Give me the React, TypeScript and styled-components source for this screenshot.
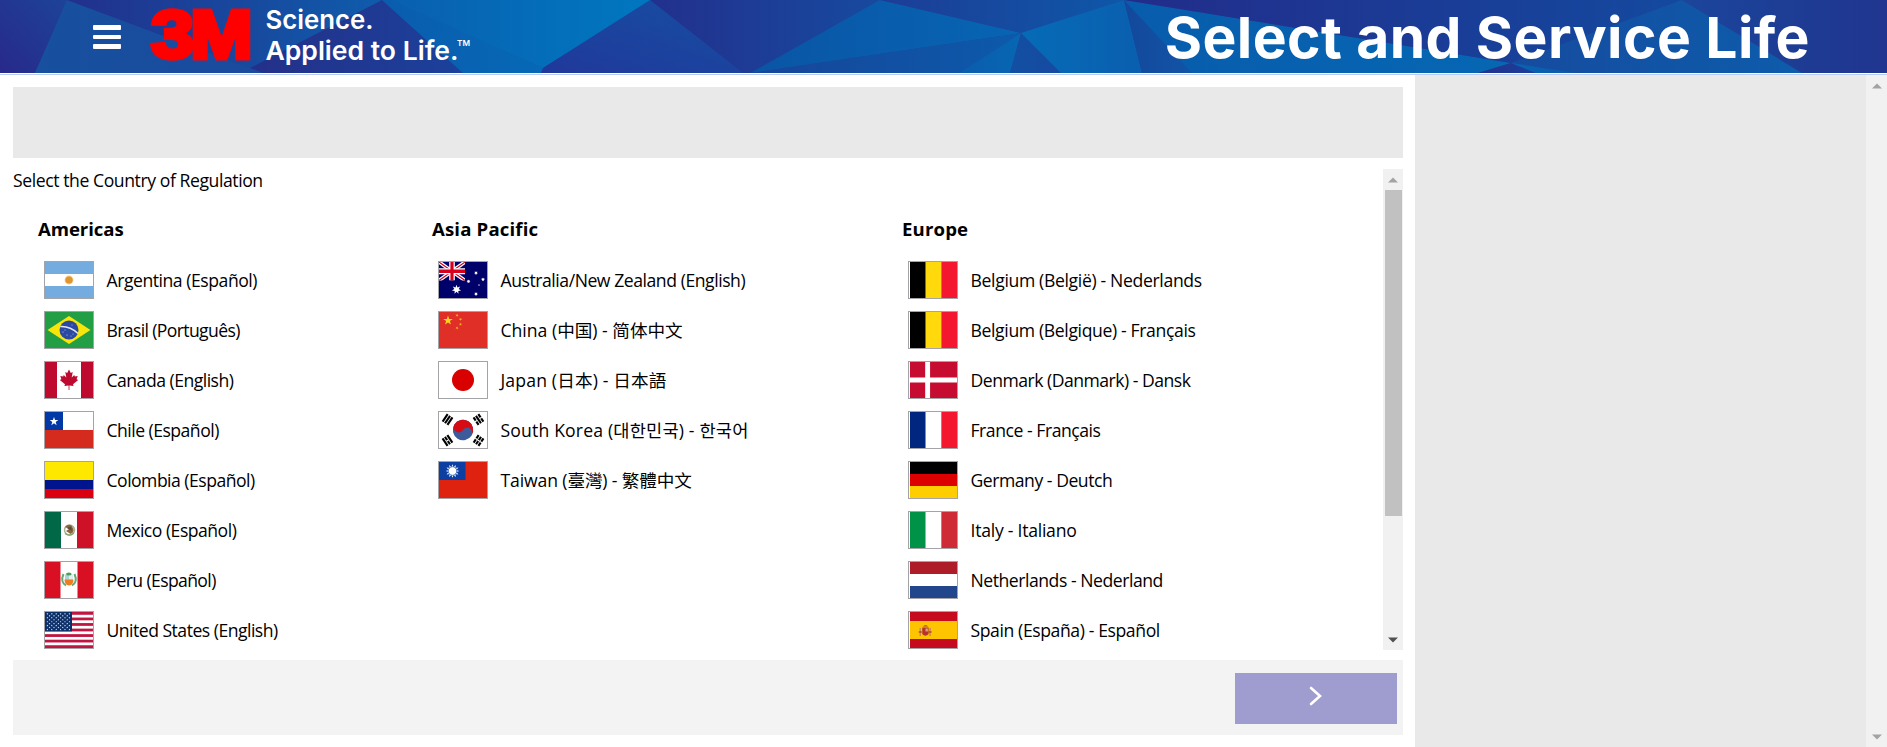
import React from "react";
import styled, { createGlobalStyle } from "styled-components";

const GlobalStyle = createGlobalStyle`
  * { box-sizing: border-box; }
  html, body { margin: 0; padding: 0; background: #fff; overflow: hidden; }
  body { font-family: "Open Sans", "Noto Sans CJK SC", "Noto Sans CJK KR", sans-serif; color: #000; }
`;

const Page = styled.div`
  display: flex;
  flex-direction: column;
  width: 100%;
  height: 747px;
`;

const Header = styled.header`
  display: grid;
  flex: none;
  height: 75px;
  border-bottom: 1px solid #b9cdea;
  > * { grid-area: 1 / 1; }
`;

const Backdrop = styled.svg`
  display: block;
  width: 100%;
  height: 73px;
`;

const HeaderContent = styled.div`
  z-index: 1;
  display: flex;
  align-items: flex-start;
  height: 73px;
  padding-left: 93px;
`;

const MenuButton = styled.button`
  display: flex;
  flex-direction: column;
  gap: 5px;
  width: 28px;
  margin: 25px 24px 0 0;
  padding: 0;
  border: 0;
  background: none;
`;

const MenuBar = styled.span`
  height: 4.5px;
  border-radius: 1px;
  background: #fff;
`;

const Logo = styled.svg`
  display: block;
  flex: none;
  width: 330px;
  height: 73px;
  overflow: visible;
  font-family: Inter, sans-serif;
`;

const Title = styled.h1`
  margin: 0 77px 0 auto;
  font: 700 57px/75px Inter, sans-serif;
  letter-spacing: 0.42px;
  color: #fff;
  white-space: nowrap;
`;

const Body = styled.div`
  display: flex;
  flex: 1;
  min-height: 0;
`;

const Main = styled.main`
  display: flex;
  flex-direction: column;
  width: 1415px;
  padding: 12px 12px 13px 13px;
`;

const Banner = styled.div`
  flex: none;
  height: 71px;
  background: #e9e9e9;
`;

const ScrollArea = styled.section`
  display: flex;
  flex: none;
  height: 481px;
  margin: 11px 0 10px;
`;

const Content = styled.div`
  flex: 1;
`;

const Prompt = styled.p<{ $spacing: number }>`
  margin: 0;
  font-size: 17.6px;
  line-height: 22px;
  letter-spacing: ${(p) => p.$spacing}px;
`;

const Regions = styled.div`
  display: grid;
  grid-template-columns: 394px 470px 1fr;
  padding: 24px 0 0 25px;
`;

const RegionTitle = styled.h2<{ $spacing: number }>`
  margin: 0 0 18px;
  font-size: 18.6px;
  line-height: 28px;
  font-weight: 700;
  letter-spacing: ${(p) => p.$spacing}px;
`;

const CountryList = styled.ul`
  display: flex;
  flex-direction: column;
  gap: 12px;
  margin: 0;
  padding: 0 0 0 6px;
  list-style: none;
`;

const Country = styled.li`
  display: flex;
  align-items: center;
  gap: 12.5px;
  height: 38px;
`;

const FlagFrame = styled.span<{ $inset?: boolean }>`
  display: flex;
  width: 50px;
  height: 38px;
  padding-left: ${(p) => (p.$inset ? 1 : 0)}px;
  border: 1px solid #a3a3a8;
  background: #fff;
  > svg { display: block; width: 100%; height: 100%; }
`;

const CountryName = styled.span<{ $spacing: number }>`
  font-size: 17.6px;
  line-height: 38px;
  letter-spacing: ${(p) => p.$spacing}px;
  white-space: nowrap;
`;

const Scrollbar = styled.div<{ $width: number }>`
  display: flex;
  flex: none;
  flex-direction: column;
  align-items: center;
  width: ${(p) => p.$width}px;
  background: #f1f1f1;
`;

const ArrowBox = styled.svg`
  display: block;
  flex: none;
  width: 20px;
  height: 21px;
`;

const Thumb = styled.div<{ $height: number }>`
  width: 17px;
  height: ${(p) => p.$height}px;
  margin-bottom: auto;
  background: #c1c1c1;
`;

const Footer = styled.footer`
  display: flex;
  flex: none;
  align-items: center;
  justify-content: flex-end;
  height: 75px;
  padding: 1px 6px 0 0;
  background: #f3f3f3;
`;

const NextButton = styled.button`
  display: flex;
  align-items: center;
  justify-content: center;
  width: 162px;
  height: 51px;
  padding: 0 0 4px;
  border: 0;
  background: #9f9dcf;
`;

const Side = styled.aside`
  display: flex;
  flex: 1;
  justify-content: flex-end;
  background: #e9e9e9;
`;

const starPoints = (cx: number, cy: number, r: number, tips = 5, inner = 0.4, turn = -90) =>
  Array.from({ length: tips * 2 }, (_, i) => {
    const a = ((turn + (i * 180) / tips) * Math.PI) / 180;
    const d = i % 2 ? r * inner : r;
    return `${(cx + d * Math.cos(a)).toFixed(2)},${(cy + d * Math.sin(a)).toFixed(2)}`;
  }).join(" ");

type StarProps = { x: number; y: number; r: number; fill?: string; tips?: number; inner?: number; turn?: number };
const Star = ({ x, y, r, fill = "#fff", tips, inner, turn }: StarProps) => (
  <polygon points={starPoints(x, y, r, tips, inner, turn)} fill={fill} />
);

const Columns = ({ colors }: { colors: string[] }) => (
  <>{colors.map((c, i) => <rect key={i} x={i * 16} width="16.1" height="36" fill={c} />)}</>
);
const Rows = ({ colors }: { colors: string[] }) => (
  <>{colors.map((c, i) => <rect key={i} y={i * 12} width="48" height="12.1" fill={c} />)}</>
);

const trigrams = [
  { x: 8.5, y: 7.5, turn: -56, broken: [] as number[] },
  { x: 39.5, y: 7.5, turn: 56, broken: [0, 2] },
  { x: 8.5, y: 28.5, turn: 56, broken: [1] },
  { x: 39.5, y: 28.5, turn: -56, broken: [0, 1, 2] },
];

const flags: Record<string, React.ReactNode> = {
  ar: (
    <>
      <Rows colors={["#74acdf", "#fff", "#74acdf"]} />
      <circle cx="24" cy="18" r="4.4" fill="#f3c98b" />
      <circle cx="24" cy="18" r="3.6" fill="#e0962c" />
    </>
  ),
  br: (
    <>
      <rect width="48" height="36" fill="#229e45" />
      <path d="M2.5 18 24 4 45.5 18 24 32Z" fill="#f8e509" />
      <circle cx="24" cy="18" r="9.5" fill="#2b49a3" />
      <path d="M15.2 14.6Q25 14 33 21.5" fill="none" stroke="#dfe8ee" strokeWidth="1.5" />
      <g fill="#c9d3ea">
        <circle cx="18" cy="20" r=".6" /><circle cx="22" cy="23" r=".6" /><circle cx="26" cy="24" r=".5" />
        <circle cx="27" cy="13" r=".5" /><circle cx="20" cy="18" r=".5" /><circle cx="28" cy="22" r=".5" />
      </g>
    </>
  ),
  ca: (
    <>
      <rect width="48" height="36" fill="#fff" />
      <rect width="12" height="36" fill="#bf0a30" />
      <rect x="36" width="12" height="36" fill="#bf0a30" />
      <path
        d="M24 7.5 22.2 11 20.3 10.1 21.3 15.5 18.7 12.9 18.2 14.4 15.3 13.9 16.4 17.2 14.8 18 20 22.3 19.4 24 23.6 23.4V28H24.4V23.4L28.6 24 28 22.3 33.2 18 31.6 17.2 32.7 13.9 29.8 14.4 29.3 12.9 26.7 15.5 27.7 10.1 25.8 11Z"
        fill="#bf0a30"
      />
    </>
  ),
  cl: (
    <>
      <rect width="48" height="36" fill="#fff" />
      <rect y="18" width="48" height="18" fill="#d52b1e" />
      <rect width="18" height="18" fill="#0039a6" />
      <Star x={9} y={9.5} r={4.5} />
    </>
  ),
  co: (
    <>
      <rect width="48" height="36" fill="#ffe800" />
      <rect y="18" width="48" height="9" fill="#00148e" />
      <rect y="27" width="48" height="9" fill="#da0010" />
    </>
  ),
  mx: (
    <>
      <Columns colors={["#006847", "#fff", "#ce1126"]} />
      <ellipse cx="24.5" cy="18" rx="5" ry="5" fill="none" stroke="#a9b391" strokeWidth="1.5" />
      <path d="M20 15Q23 11.5 26.5 13.5L28.5 17Q29 21 25.5 22L21 19 24 17Z" fill="#8a6542" />
      <path d="M22 16 26 14.5 27 19Z" fill="#5b4936" />
      <path d="M20 21.5Q24.5 25 29 21" fill="none" stroke="#80a36b" strokeWidth="1.2" />
    </>
  ),
  pe: (
    <>
      <rect width="48" height="36" fill="#fff" />
      <rect width="15.5" height="36" fill="#d91023" />
      <rect x="32.5" width="15.5" height="36" fill="#d91023" />
      <path d="M18.5 12Q15 20 21 23.5M29.5 12Q33 20 27 23.5" fill="none" stroke="#65a873" strokeWidth="2" />
      <path d="M20 12.500h7.500v5.500H20z" fill="#a9d6d9" />
      <path d="M24 13h3.500v4.500h-3.500z" fill="#e9efe6" />
      <path d="M19.500 17.500h9q0 5.500-4.500 6-4.500-.5-4.500-6Z" fill="#ee7d22" />
      <ellipse cx="23.8" cy="12" rx="2.8" ry="1.5" fill="#4f9c5e" />
    </>
  ),
  us: (
    <>
      <rect width="48" height="36" fill="#fff" />
      {Array.from({ length: 7 }, (_, i) => <rect key={i} y={i * 5.54} width="48" height="2.77" fill="#bf1540" />)}
      <rect width="27" height="19.4" fill="#0b2f69" />
      {Array.from({ length: 9 }, (_, r) =>
        Array.from({ length: r % 2 ? 5 : 6 }, (_, c) => (
          <Star key={`${r}-${c}`} x={2.4 + c * 4.4 + (r % 2 ? 2.2 : 0)} y={1.9 + r * 1.95} r={1} />
        ))
      )}
    </>
  ),
  au: (
    <>
      <rect width="48" height="36" fill="#00006b" />
      <svg width="26" height="18.5" viewBox="0 0 26 18" preserveAspectRatio="none">
        <path d="M0 0 26 18M26 0 0 18" stroke="#fff" strokeWidth="3.6" />
        <path d="M0 0 26 18M26 0 0 18" stroke="#d6001c" strokeWidth="1.1" />
        <path d="M13 0V18M0 9H26" stroke="#fff" strokeWidth="5.6" />
        <path d="M13 0V18M0 9H26" stroke="#d6001c" strokeWidth="3.2" />
      </svg>
      <Star x={17.5} y={27.5} r={4.7} tips={7} inner={0.48} />
      <Star x={37} y={11} r={2} tips={7} inner={0.5} />
      <Star x={29.5} y={19.5} r={2} tips={7} inner={0.5} />
      <Star x={44} y={17.5} r={2} tips={7} inner={0.5} />
      <Star x={40} y={23} r={1.1} />
      <Star x={37} y={32} r={2} tips={7} inner={0.5} />
    </>
  ),
  cn: (
    <>
      <rect width="48" height="36" fill="#df2f27" />
      <Star x={9} y={8.5} r={5} fill="#ffd21c" />
      <Star x={18} y={3.3} r={1.7} fill="#f7b51e" turn={0} />
      <Star x={21.5} y={7.3} r={1.7} fill="#f7b51e" turn={20} />
      <Star x={21.5} y={12.2} r={1.7} fill="#f7b51e" />
      <Star x={18} y={16} r={1.7} fill="#f7b51e" turn={10} />
    </>
  ),
  jp: (
    <>
      <rect width="48" height="36" fill="#fff" />
      <circle cx="24" cy="18" r="11" fill="#d90000" />
    </>
  ),
  kr: (
    <>
      <rect width="48" height="36" fill="#fff" />
      <g transform="rotate(32 24 18)">
        <circle cx="24" cy="18" r="10.2" fill="#3d5b9b" />
        <path
          d="M13.8 18A10.2 10.2 0 0 1 34.2 18A5.1 5.1 0 0 0 24 18A5.1 5.1 0 0 1 13.8 18Z"
          fill="#d60b14"
        />
      </g>
      {trigrams.map((t, i) => (
        <g key={i} transform={`translate(${t.x} ${t.y}) rotate(${t.turn})`}>
          {[0, 1, 2].map((n) => (
            <g key={n}>
              <rect x="-4.5" y={-3.9 + n * 2.9} width="9" height="2.1" fill="#000" />
              {t.broken.includes(n) && <rect x="-.6" y={-4 + n * 2.9} width="1.2" height="2.4" fill="#fff" />}
            </g>
          ))}
        </g>
      ))}
    </>
  ),
  tw: (
    <>
      <rect width="48" height="36" fill="#df2110" />
      <rect width="26.5" height="18" fill="#0d3fa3" />
      <Star x={13.5} y={9} r={6.8} tips={12} inner={0.6} />
      <circle cx="13.5" cy="9" r="4.3" fill="none" stroke="#0d3fa3" strokeWidth=".7" />
    </>
  ),
  be: <Columns colors={["#000", "#ffd90c", "#f31830"]} />,
  dk: (
    <>
      <rect width="48" height="36" fill="#c60c30" />
      <path d="M18 0V36M0 18H48" stroke="#fff" strokeWidth="5" />
    </>
  ),
  fr: <Columns colors={["#00267f", "#fff", "#f31830"]} />,
  de: <Rows colors={["#000", "#d00", "#ffce00"]} />,
  it: <Columns colors={["#009246", "#fff", "#ce2b37"]} />,
  nl: <Rows colors={["#ae1c28", "#fff", "#21468b"]} />,
  es: (
    <>
      <rect width="48" height="36" fill="#c60b1e" />
      <rect y="9" width="48" height="18" fill="#ffc400" />
      <path d="M10.5 16v8M20.5 16v8" stroke="#c98a55" strokeWidth="1.5" />
      <path d="M12.5 15.5h6.5v6.5q-3.2 3.5-6.5 0Z" fill="#b5332a" />
      <path d="M15.8 16.5h2.5v3h-2.5z" fill="#d9a08a" />
      <path d="M13 14.5Q15.8 12 18.6 14.5Z" fill="#a63e25" />
      <path d="M9 20h3M19 20h3" stroke="#b3492c" strokeWidth="1.4" />
    </>
  ),
};

type Entry = { flag: string; name: string; spacing: number };
type Region = { title: string; inset?: boolean; spacing: number; countries: Entry[] };

const regions: Region[] = [
  {
    title: "Americas",
    spacing: -0.08,
    countries: [
      { flag: "ar", name: "Argentina (Español)", spacing: -0.46 },
      { flag: "br", name: "Brasil (Português)", spacing: -0.63 },
      { flag: "ca", name: "Canada (English)", spacing: -0.51 },
      { flag: "cl", name: "Chile (Español)", spacing: -0.52 },
      { flag: "co", name: "Colombia (Español)", spacing: -0.52 },
      { flag: "mx", name: "Mexico (Español)", spacing: -0.5 },
      { flag: "pe", name: "Peru (Español)", spacing: -0.62 },
      { flag: "us", name: "United States (English)", spacing: -0.51 },
    ],
  },
  {
    title: "Asia Pacific",
    spacing: 0.15,
    countries: [
      { flag: "au", name: "Australia/New Zealand (English)", spacing: -0.45 },
      { flag: "cn", name: "China (中国) - 简体中文", spacing: 0 },
      { flag: "jp", name: "Japan (日本) - 日本語", spacing: 0.15 },
      { flag: "kr", name: "South Korea (대한민국) - 한국어", spacing: 0.17 },
      { flag: "tw", name: "Taiwan (臺灣) - 繁體中文", spacing: -0.12 },
    ],
  },
  {
    title: "Europe",
    spacing: 0.15,
    inset: true,
    countries: [
      { flag: "be", name: "Belgium (België) - Nederlands", spacing: -0.34 },
      { flag: "be", name: "Belgium (Belgique) - Français", spacing: -0.36 },
      { flag: "dk", name: "Denmark (Danmark) - Dansk", spacing: -0.5 },
      { flag: "fr", name: "France - Français", spacing: -0.46 },
      { flag: "de", name: "Germany - Deutch", spacing: -0.47 },
      { flag: "it", name: "Italy - Italiano", spacing: -0.25 },
      { flag: "nl", name: "Netherlands - Nederland", spacing: -0.46 },
      { flag: "es", name: "Spain (España) - Español", spacing: -0.4 },
    ],
  },
];

const facets: [string, string, string, string][] = [
  ["0,0 68,0 35,73 0,73", "#28298a", "#1d4399", "up"],
  ["67,0 35,73 263,73", "#17509f", "#1a4a9e", "x"],
  ["67,0 382,0 270,73 263,73", "#22308c", "#0f5cac", "x"],
  ["382,0 463,73 263,73 250,68", "#243089", "#1b419b", "x"],
  ["382,0 396,0 543,68 541,73 463,73", "#0a5cae", "#0669b5", "x"],
  ["392,0 652,0 543,68", "#0a60b0", "#0077c0", "x"],
  ["650,0 543,68 541,73 745,73", "#20389a", "#164fa3", "up"],
  ["650,0 880,0 750,73 743,73", "#22308d", "#174a9f", "x"],
  ["880,0 1021,33 751,73", "#0a55a5", "#0765b3", "x"],
  ["751,73 1021,33 959,73", "#174599", "#0c5aab", "x"],
  ["880,0 1124,0 1021,33", "#1d3d97", "#0e57a8", "x"],
  ["1021,33 1010,73 959,73", "#0a5dad", "#0766b2", "x"],
  ["1021,33 1061,73 1010,73", "#124fa3", "#164aa0", "x"],
  ["1021,33 1124,0 1142,73 1061,73", "#066bb6", "#0a5faf", "x"],
  ["1124,0 1142,73 1192,73", "#13489c", "#1254a6", "x"],
  ["1124,0 1511,63 1478,73 1192,73", "#085cac", "#0667b3", "x"],
  ["1124,0 1682,0 1511,63", "#222c8a", "#14499f", "x"],
  ["1511,63 1682,0 1802,73 1560,73", "#164b9f", "#0d5cab", "x"],
  ["1511,63 1478,73 1536,73", "#23318d", "#1c3f98", "x"],
  ["1511,63 1536,73 1575,73", "#0764b2", "#0c5aab", "x"],
  ["1682,0 1887,0 1887,73 1802,73", "#1b459b", "#20358f", "x"],
];

const HeaderBackdrop = () => (
  <Backdrop viewBox="0 0 1887 73" preserveAspectRatio="none" aria-hidden>
    <defs>
      {facets.map(([, from, to, dir], i) => (
        <linearGradient key={i} id={`facet${i}`} x1="0" y1={dir === "up" ? "1" : "0"} x2="1" y2="0">
          <stop offset="0" stopColor={from} />
          <stop offset="1" stopColor={to} />
        </linearGradient>
      ))}
    </defs>
    <rect width="1887" height="73" fill="#17489e" />
    {facets.map(([points], i) => <polygon key={i} points={points} fill={`url(#facet${i})`} />)}
  </Backdrop>
);

const BrandLogo = () => (
  <Logo viewBox="145 0 330 73" role="img" aria-label="3M Science. Applied to Life.">
    <g fill="#f00" stroke="#f00" fontWeight="700" fontSize="68" fontFamily="Liberation Sans, sans-serif">
      <text x="151" y="58" textLength="43" lengthAdjust="spacingAndGlyphs" strokeWidth="4.5">3</text>
      <text x="190.5" y="58" textLength="62" lengthAdjust="spacingAndGlyphs" strokeWidth="5">M</text>
    </g>
    <g fill="#fff" fontWeight="600">
      <text x="265.5" y="29" fontSize="26" textLength="108" lengthAdjust="spacingAndGlyphs">Science.</text>
      <text x="265.5" y="60" fontSize="26" textLength="193" lengthAdjust="spacingAndGlyphs">Applied to Life.</text>
      <text x="457" y="46" fontSize="8" textLength="13" lengthAdjust="spacingAndGlyphs">TM</text>
    </g>
  </Logo>
);

const Arrow = ({ down, color }: { down?: boolean; color: string }) => (
  <ArrowBox viewBox="0 0 20 21">
    <path d={down ? "M5 8.5H15L10 13.5Z" : "M5 13.5H15L10 8.5Z"} fill={color} />
  </ArrowBox>
);

export default function App() {
  return (
    <Page>
      <GlobalStyle />
      <Header>
        <HeaderBackdrop />
        <HeaderContent>
          <MenuButton aria-label="Menu">
            <MenuBar />
            <MenuBar />
            <MenuBar />
          </MenuButton>
          <BrandLogo />
          <Title>Select and Service Life</Title>
        </HeaderContent>
      </Header>
      <Body>
        <Main>
          <Banner />
          <ScrollArea>
            <Content>
              <Prompt $spacing={-0.42}>Select the Country of Regulation</Prompt>
              <Regions>
                {regions.map((region) => (
                  <section key={region.title}>
                    <RegionTitle $spacing={region.spacing}>{region.title}</RegionTitle>
                    <CountryList>
                      {region.countries.map((c) => (
                        <Country key={c.name}>
                          <FlagFrame $inset={region.inset}>
                            <svg viewBox="0 0 48 36" preserveAspectRatio="none">{flags[c.flag]}</svg>
                          </FlagFrame>
                          <CountryName $spacing={c.spacing}>{c.name}</CountryName>
                        </Country>
                      ))}
                    </CountryList>
                  </section>
                ))}
              </Regions>
            </Content>
            <Scrollbar $width={20}>
              <Arrow color="#a3a3a3" />
              <Thumb $height={326} />
              <Arrow down color="#505050" />
            </Scrollbar>
          </ScrollArea>
          <Footer>
            <NextButton aria-label="Next">
              <svg width="14" height="20" viewBox="0 0 14 20">
                <path d="M2 2 11 10 2 18" fill="none" stroke="#fff" strokeWidth="2.6" strokeLinecap="round" />
              </svg>
            </NextButton>
          </Footer>
        </Main>
        <Side>
          <Scrollbar $width={21}>
            <Arrow color="#a3a3a3" />
            <Thumb $height={0} />
            <Arrow down color="#a3a3a3" />
          </Scrollbar>
        </Side>
      </Body>
    </Page>
  );
}
